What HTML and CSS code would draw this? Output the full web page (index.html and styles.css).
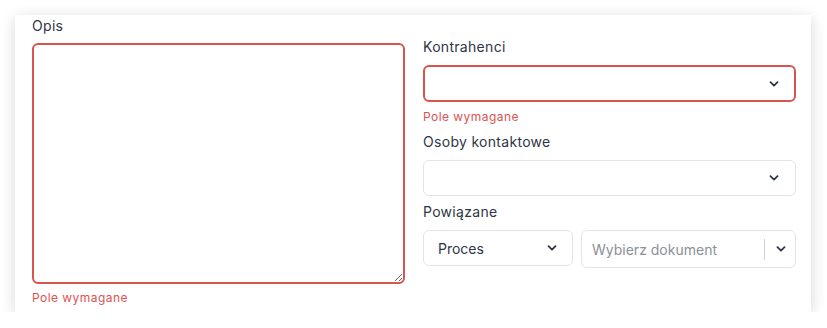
FILE: index.html
```html
<!DOCTYPE html>
<html lang="pl">
<head>
<meta charset="utf-8">
<link rel="stylesheet" href="styles.css">
</head>
<body>
<div class="card">
  <div class="col col-left">
    <label class="label">Opis</label>
    <textarea class="textarea is-invalid"></textarea>
    <div class="error">Pole wymagane</div>
  </div>
  <div class="col col-right">
    <label class="label">Kontrahenci</label>
    <div class="select is-invalid">
      <span class="value"></span>
      <svg class="chev" viewBox="0 0 10 6"><path d="M1.5 1.2 L5 4.6 L8.5 1.2"/></svg>
    </div>
    <div class="error">Pole wymagane</div>
    <label class="label label-gap">Osoby kontaktowe</label>
    <div class="select">
      <span class="value"></span>
      <svg class="chev" viewBox="0 0 10 6"><path d="M1.5 1.2 L5 4.6 L8.5 1.2"/></svg>
    </div>
    <label class="label label-gap">Powiązane</label>
    <div class="row">
      <div class="select select-proces">
        <span class="value">Proces</span>
        <svg class="chev" viewBox="0 0 10 6"><path d="M1.5 1.2 L5 4.6 L8.5 1.2"/></svg>
      </div>
      <div class="select select-doc">
        <span class="value placeholder">Wybierz dokument</span>
        <span class="sep"></span>
        <svg class="chev" viewBox="0 0 10 6"><path d="M1.5 1.2 L5 4.6 L8.5 1.2"/></svg>
      </div>
    </div>
  </div>
</div>
</body>
</html>
```
FILE: styles.css
```css
html, body {
  margin: 0;
  padding: 0;
  background: #ffffff;
}
body {
  font-family: "Inter", "Noto Sans", sans-serif;
  color: #2d3441;
}
.card {
  margin: 15px 0 0 15px;
  width: 796px;
  height: 297px;
  box-sizing: border-box;
  background: #fff;
  box-shadow: 0 3px 14px rgba(0, 0, 0, 0.16);
  padding: 1px 15px 0 17px;
  display: grid;
  grid-template-columns: 373px 373px;
  column-gap: 18px;
}
.col {
  display: flex;
  flex-direction: column;
}
.col-right {
  padding-top: 21px;
}
.label {
  font-size: 14px;
  line-height: 20px;
  font-weight: 400;
  letter-spacing: 0.3px;
  color: #2e3646;
  margin-bottom: 8px;
}
.col-left .label {
  margin-bottom: 7px;
}
.label-gap {
  margin-top: 6px;
}
.textarea {
  display: block;
  box-sizing: border-box;
  width: 373px;
  height: 241px;
  margin: 0;
  border: 2px solid #d9534f;
  border-radius: 6px;
  resize: vertical;
  outline: none;
  font: inherit;
  padding: 8px;
}
.error {
  font-size: 12px;
  line-height: 18px;
  letter-spacing: 0.45px;
  color: #de5252;
  margin-top: 5px;
}
.col-right .error {
  margin-top: 6px;
}
.select {
  box-sizing: border-box;
  height: 36px;
  border: 1px solid #e1e5ea;
  border-radius: 6px;
  display: flex;
  align-items: center;
  padding: 0 16px 0 14px;
  font-size: 14px;
  background: #fff;
}
.select.is-invalid {
  height: 37px;
  border: 2px solid #d9534f;
  padding: 0 15px 0 13px;
}
.value {
  flex: 1;
  color: #2e3646;
}
.placeholder {
  color: #8a9099;
}
.chev {
  width: 10px;
  height: 6px;
  fill: none;
  stroke: #2e3646;
  stroke-width: 1.8;
  stroke-linecap: round;
  stroke-linejoin: round;
}
.row {
  display: flex;
  gap: 8px;
  align-items: flex-start;
}
.select-proces {
  width: 150px;
  padding-left: 14px;
  padding-right: 15px;
}
.select-doc {
  flex: 1;
  height: 38px;
  padding-left: 10px;
  padding-right: 9px;
}
.sep {
  width: 1px;
  height: 21px;
  background: #cfd3d8;
  margin-right: 11px;
}
```
